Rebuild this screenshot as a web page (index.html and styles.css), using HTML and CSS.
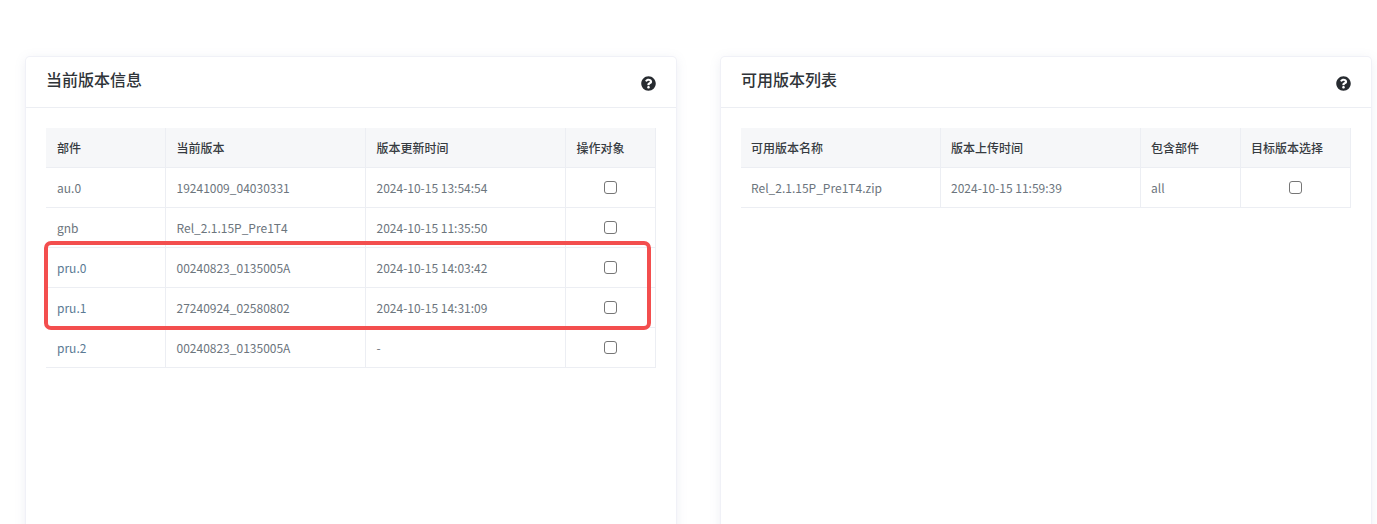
FILE: index.html
```html
<!DOCTYPE html>
<html lang="zh-CN">
<head>
<meta charset="utf-8">
<title>版本信息</title>
<link rel="stylesheet" href="styles.css">
</head>
<body>
<main class="page">
  <section class="card">
    <header class="card-head">
      <h2 class="card-title">当前版本信息</h2>
      <svg class="help" viewBox="0 0 512 512" aria-hidden="true"><path d="M504 256c0 137-111 248-248 248S8 393 8 256C8 119 119 8 256 8s248 111 248 248zM262.700 90c-54.500 0-89.300 23-116.500 63.800-3.500 5.300-2.400 12.400 2.700 16.300l34.700 26.300c5.200 3.900 12.600 3 16.700-2.100 17.900-22.700 30.100-35.800 57.300-35.800 20.400 0 45.700 13.100 45.700 32.900 0 15-12.400 22.700-32.500 34C247.100 238.500 216 254.900 216 296v4c0 6.600 5.400 12 12 12h56c6.600 0 12-5.400 12-12v-1.300c0-28.500 83.200-29.700 83.200-106.700 0-58-60.200-102-116.500-102zM256 338c-25.400 0-46 20.600-46 46 0 25.400 20.600 46 46 46s46-20.600 46-46c0-25.400-20.600-46-46-46z"/></svg>
    </header>
    <div class="card-body">
      <table class="grid grid-current">
        <thead>
          <tr><th>部件</th><th>当前版本</th><th>版本更新时间</th><th>操作对象</th></tr>
        </thead>
        <tbody>
          <tr><td>au.0</td><td>19241009_04030331</td><td>2024-10-15 13:54:54</td><td class="pick"><input type="checkbox"></td></tr>
          <tr><td>gnb</td><td>Rel_2.1.15P_Pre1T4</td><td>2024-10-15 11:35:50</td><td class="pick"><input type="checkbox"></td></tr>
          <tr><td class="link">pru.0</td><td>00240823_0135005A</td><td>2024-10-15 14:03:42</td><td class="pick"><input type="checkbox"></td></tr>
          <tr><td class="link">pru.1</td><td>27240924_02580802</td><td>2024-10-15 14:31:09</td><td class="pick"><input type="checkbox"></td></tr>
          <tr><td class="link">pru.2</td><td>00240823_0135005A</td><td>-</td><td class="pick"><input type="checkbox"></td></tr>
        </tbody>
      </table>
      <div class="callout"></div>
    </div>
  </section>
  <section class="card">
    <header class="card-head">
      <h2 class="card-title">可用版本列表</h2>
      <svg class="help" viewBox="0 0 512 512" aria-hidden="true"><path d="M504 256c0 137-111 248-248 248S8 393 8 256C8 119 119 8 256 8s248 111 248 248zM262.700 90c-54.500 0-89.300 23-116.500 63.800-3.500 5.300-2.400 12.400 2.700 16.300l34.700 26.300c5.200 3.900 12.600 3 16.700-2.100 17.900-22.700 30.100-35.800 57.300-35.800 20.400 0 45.700 13.100 45.700 32.900 0 15-12.400 22.700-32.500 34C247.100 238.500 216 254.900 216 296v4c0 6.600 5.400 12 12 12h56c6.600 0 12-5.400 12-12v-1.300c0-28.500 83.200-29.700 83.200-106.700 0-58-60.200-102-116.500-102zM256 338c-25.400 0-46 20.600-46 46 0 25.400 20.600 46 46 46s46-20.600 46-46c0-25.400-20.600-46-46-46z"/></svg>
    </header>
    <div class="card-body">
      <table class="grid grid-available">
        <thead>
          <tr><th>可用版本名称</th><th>版本上传时间</th><th>包含部件</th><th>目标版本选择</th></tr>
        </thead>
        <tbody>
          <tr><td>Rel_2.1.15P_Pre1T4.zip</td><td>2024-10-15 11:59:39</td><td>all</td><td class="pick"><input type="checkbox"></td></tr>
        </tbody>
      </table>
    </div>
  </section>
</main>
</body>
</html>
```

FILE: styles.css
```css
* { box-sizing: border-box; }
html, body { margin: 0; height: 524px; overflow: hidden; background: #fff; }
body { font-family: "Noto Sans CJK SC", "Noto Sans", sans-serif; font-size: 12px; color: #6c757d; }
.page { display: flex; gap: 45px; padding: 57px 6px 0 26px; height: 524px; overflow: hidden; }
.card {
  flex: 0 0 650px;
  height: 700px;
  background: #fff;
  border-radius: 4px;
  box-shadow: 0 0 0 1px #f0f1f7, 0 2px 12px rgba(120, 125, 165, 0.15);
}
.card-head {
  display: flex;
  align-items: center;
  justify-content: space-between;
  height: 51px;
  padding: 0 20px;
  border-bottom: 1px solid #eceef3;
}
.card-title { margin: -7px 0 0; font-size: 16px; font-weight: 500; line-height: 24px; color: #2f3438; }
.help { width: 15px; height: 15px; fill: #272b30; margin: 3px 0 0 0; }
.card-body { position: relative; padding: 20px; }
.grid { width: 610px; border-collapse: separate; border-spacing: 0; table-layout: fixed; }
.grid th, .grid td {
  height: 40px;
  padding: 0 10px;
  text-align: left;
  border-bottom: 1px solid #eceef3;
  border-right: 1px solid #eceef3;
  line-height: 18px;
}
.grid-current td, .grid-current th { padding-left: 10.5px; }
.grid-current th:first-child, .grid-current td:first-child { padding-left: 11px; }
.grid th { background: #f6f7f9; font-weight: 500; color: #363b41; }
.grid-current th:nth-child(1) { width: 120px; }
.grid-current th:nth-child(2) { width: 200px; }
.grid-current th:nth-child(3) { width: 200px; }
.grid-current th:nth-child(4) { width: 90px; }
.grid-available th:nth-child(1) { width: 200px; }
.grid-available th:nth-child(2) { width: 200px; }
.grid-available th:nth-child(3) { width: 100px; }
.grid-available th:nth-child(4) { width: 110px; }
.link { color: #5b7a94; }
.grid .pick { text-align: center; padding: 0 10px; }
.pick input {
  appearance: none;
  display: block;
  width: 13px;
  height: 13px;
  margin: 0 auto;
  background: #fff;
  border: 1px solid #767676;
  border-radius: 3px;
}
.callout {
  position: absolute;
  left: 18px;
  top: 133px;
  width: 607px;
  height: 89px;
  border: 4px solid #f34e4e;
  border-radius: 7px;
  pointer-events: none;
}
```
